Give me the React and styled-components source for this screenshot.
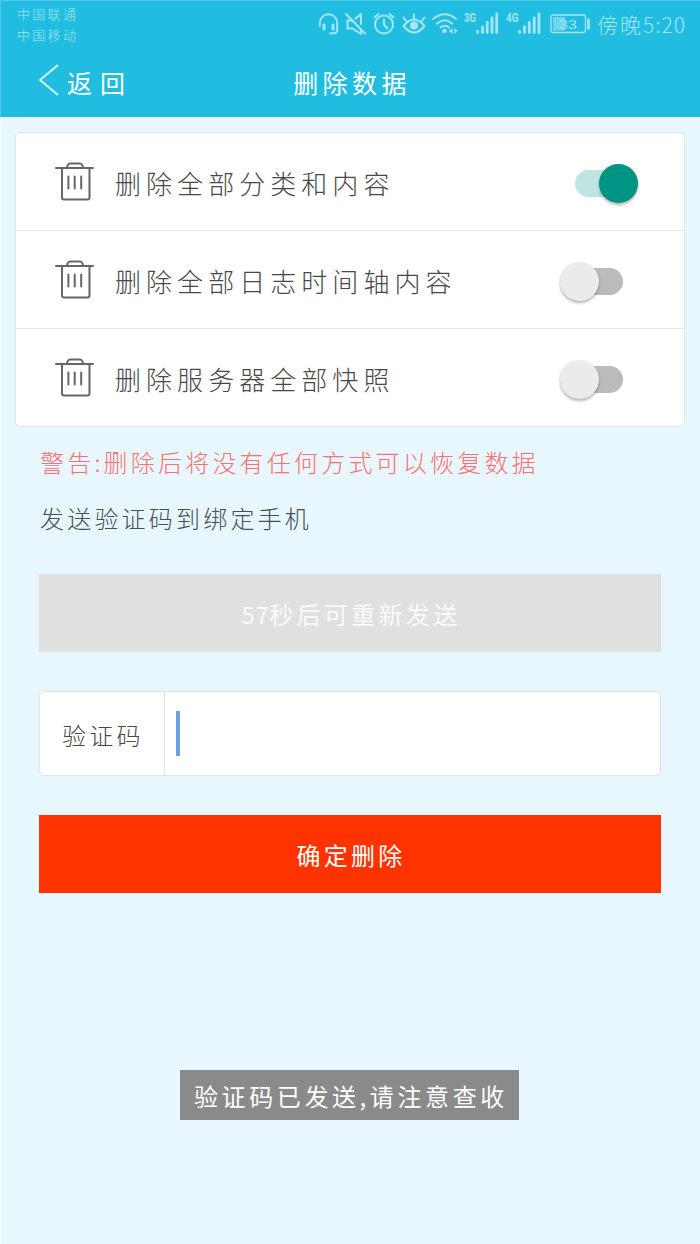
import React, { useState } from 'react';
import styled, { createGlobalStyle } from 'styled-components';

const GlobalStyle = createGlobalStyle`
  * {
    box-sizing: border-box;
  }
  body {
    margin: 0;
    background: #e8f7fd;
    font-family: "Noto Sans CJK SC", sans-serif;
  }
  button {
    font-family: inherit;
  }
`;

const Page = styled.div`
  position: relative;
  width: 700px;
  height: 1244px;
  background: #e8f7fd;
  box-shadow: inset 1px 0 #f6fcff;
  overflow: hidden;
`;

const Header = styled.header`
  height: 117px;
  background: #20bde1;
  box-shadow: inset 1px 1px #4fcbe9;
`;

const StatusBar = styled.div`
  display: flex;
  justify-content: space-between;
  height: 48px;
  padding: 3px 13px 0 17px;
  color: #a6e5f4;
`;

const Carriers = styled.div`
  font-weight: 300;
  font-size: 13px;
  line-height: 21px;
  letter-spacing: 2.3px;
  color: #a6e5f4;
`;

const StatusIcons = styled.div`
  display: flex;
  height: 42px;
  align-items: center;
`;

const Clock = styled.span`
  margin-left: 6px;
  width: 90px;
  font-weight: 300;
  font-size: 21px;
  line-height: 40px;
  letter-spacing: 1px;
  white-space: nowrap;
  span {
    letter-spacing: 2px;
  }
`;

const NavBar = styled.div`
  display: grid;
  grid-template-columns: 200px 1fr 200px;
  height: 69px;
  padding-bottom: 1px;
  align-items: center;
  color: #fff;
`;

const NavText = styled.span`
  font-size: 25px;
  line-height: 36px;
  letter-spacing: ${props => props.$gap || '4.4px'};
`;

const Back = styled.div`
  display: flex;
  align-items: center;
  padding-left: 38px;
  svg {
    margin: -4px 8px 0 0;
  }
`;

const Title = styled.div`
  padding-left: 4px;
  text-align: center;
`;

const Card = styled.section`
  margin: 15px 15px 0;
  border: 1px solid #d9e6eb;
  border-radius: 5px;
  background: #fff;
`;

const Row = styled.div`
  display: flex;
  align-items: center;
  height: 98px;
  padding: 0 46px 0 39px;
  border-bottom: 1px solid #e3e5e6;
  &:last-child {
    height: 97px;
    border-bottom: 0;
  }
  svg {
    margin-top: -1px;
  }
`;

const RowLabel = styled.span`
  flex: 1;
  margin-left: 21px;
  padding-top: 2px;
  font-weight: 300;
  font-size: 26px;
  line-height: 40px;
  letter-spacing: 5.05px;
  color: #484848;
`;

const Switch = styled.button`
  display: flex;
  align-items: center;
  height: 40px;
  margin: 3px ${props => (props.$on ? '0' : '15px')} 0 0;
  padding: 0;
  border: 0;
  background: none;
`;

const Track = styled.span`
  display: flex;
  align-items: center;
  justify-content: ${props => (props.$on ? 'flex-end' : 'flex-start')};
  width: 47px;
  height: 27px;
  border-radius: 14px;
  background: ${props => (props.$on ? '#bde5e1' : '#bbb')};
  margin-left: ${props => (props.$on ? '0' : '16px')};
  margin-right: ${props => (props.$on ? '16px' : '0')};
`;

const Thumb = styled.span`
  flex: none;
  width: 39px;
  height: 39px;
  margin: 0 ${props => (props.$on ? '-16px 0 0' : '0 0 -16px')};
  border-radius: 50%;
  background: ${props => (props.$on ? '#009485' : '#ebebeb')};
  box-shadow: 0 2px 3px rgba(0, 0, 0, 0.3);
`;

const Form = styled.main`
  padding: 0 39px;
`;

const Message = styled.p`
  margin: ${props => props.$top} 0 0 1px;
  font-weight: 300;
  font-size: 24px;
  line-height: 36px;
  letter-spacing: 3.2px;
  white-space: nowrap;
  color: ${props => props.color};
`;

const Button = styled.button`
  display: flex;
  align-items: center;
  justify-content: center;
  width: 100%;
  height: 78px;
  margin-top: ${props => props.$top};
  padding: 0 0 0 2px;
  border: 0;
  background: ${props => props.$background};
  color: ${props => props.color};
  font-size: 24px;
  letter-spacing: 3.3px;
`;

const Digits = styled.span`
  letter-spacing: 0.6px;
`;

const Field = styled.label`
  display: flex;
  height: 85px;
  margin-top: 39px;
  border: 1px solid #dbe5e9;
  border-radius: 5px;
  background: #fff;
`;

const FieldLabel = styled.span`
  display: flex;
  align-items: center;
  width: 125px;
  padding: 1px 0 0 22px;
  border-right: 1px solid #e3e3e3;
  font-weight: 300;
  font-size: 24px;
  letter-spacing: 3.2px;
  color: #484848;
`;

const Caret = styled.span`
  width: 4px;
  height: 45px;
  margin: 19px 0 0 11px;
  background: #66a3e0;
`;

const Toast = styled.div`
  position: absolute;
  left: 180px;
  top: 1070px;
  width: 339px;
  height: 50px;
  padding: 2px 0 0 14px;
  background: #8a8a8a;
  color: #fff;
  font-size: 24px;
  line-height: 48px;
  letter-spacing: 3.6px;
  white-space: nowrap;
`;

const TrashIcon = () => (
  <svg width="39" height="39" viewBox="0 0 39 39" fill="none" stroke="#666" strokeWidth="2" strokeLinecap="round" strokeLinejoin="round">
    <path d="M1 6h37M12 5.500l.5-2q.8-2 2.500-2h10q1.700 0 2.500 2l.5 2" />
    <path d="M7 6v29.500q0 2 2 2h23.500q2 0 2-2V6M13.400 14.500v12M19.700 14.500v12M26.200 14.500v12" />
  </svg>
);

// headset, mute, alarm, eye, wifi, two signals and the battery share one strip
const SystemIcons = () => (
  <svg width="274" height="40" viewBox="316 4 274 40" fill="none" stroke="currentColor" strokeWidth="2" strokeLinecap="round" strokeLinejoin="round">
    <path d="M318.800 26v-3a8.700 8.700 0 0 1 17.400 0v7q0 3.200-3.200 3.200h-4" />
    <path d="M323 25v4M332 25v4" strokeWidth="3" />
    <path d="M345 14l19 19.500M352 20.500h-5.500v8h5l8.500 5.500v-5M354.500 18.500l5.500-4.500v10" />
    <circle cx="383" cy="24.500" r="9" />
    <path d="M383 19.500v5l3.500 4M373.500 17.500l4-3.500M392.500 17.500l-4-3.500" />
    <path d="M402.500 26q10.500-13 21 0-10.500 13-21 0zM413 19v-4.500M405.500 21.500l-3-4M420.500 21.500l3-4" />
    <circle cx="413" cy="25.500" r="4" fill="currentColor" stroke="none" />
    <path d="M432 19q12-9.500 23 0M436 23.500q8-6.500 15 0M439.500 27.500q4.500-3.500 8.500 0" />
    <circle cx="443.500" cy="31" r="2.300" fill="currentColor" stroke="none" />
    <path d="M451.500 28v6l-3.500-3zM453.500 28v6l3-3z" fill="currentColor" stroke="none" />
    <text x="463" y="21.500" fontFamily="Roboto" fontSize="12" fontWeight="700" textLength="12" lengthAdjust="spacingAndGlyphs" fill="currentColor" stroke="none">3G</text>
    <path d="M476.500 31.500v1M481.500 27v5.500M486.200 22.500v10M491 18v14.500M495.700 14v18.500" strokeWidth="2.800" />
    <text x="505" y="21.500" fontFamily="Roboto" fontSize="12" fontWeight="700" textLength="12.500" lengthAdjust="spacingAndGlyphs" fill="currentColor" stroke="none">4G</text>
    <path d="M518.500 31.500v1M523.500 27v5.500M528.300 22.500v10M533.200 18v14.500M538 14v18.500" strokeWidth="2.800" />
    <rect x="550" y="15" width="34.500" height="17.500" rx="2" strokeWidth="1.300" />
    <rect x="552" y="17" width="12" height="13.500" fill="#72d5ed" stroke="none" />
    <path d="M587.500 19.500v9" strokeWidth="2.600" />
    <text x="558" y="28.500" fontFamily="Liberation Sans" fontSize="13.500" textLength="18" lengthAdjust="spacingAndGlyphs" fill="currentColor" stroke="none">33</text>
  </svg>
);

const options = ['删除全部分类和内容', '删除全部日志时间轴内容', '删除服务器全部快照'];

const App = () => {
  const [enabled, setEnabled] = useState([true, false, false]);

  const toggle = index => {
    setEnabled(enabled.map((on, i) => (i === index ? !on : on)));
  };

  return (
    <Page>
      <GlobalStyle />
      <Header>
        <StatusBar>
          <Carriers>
            <div>中国联通</div>
            <div>中国移动</div>
          </Carriers>
          <StatusIcons>
            <SystemIcons />
            <Clock><span>傍晚</span>5:20</Clock>
          </StatusIcons>
        </StatusBar>
        <NavBar>
          <Back>
            <svg width="21" height="32" viewBox="0 0 21 32" fill="none" stroke="#d3f2f9" strokeWidth="2">
              <path d="M20 1L2 16l18 15" />
            </svg>
            <NavText $gap="8px">返回</NavText>
          </Back>
          <Title><NavText>删除数据</NavText></Title>
        </NavBar>
      </Header>

      <Card>
        {options.map((option, index) => (
          <Row key={option}>
            <TrashIcon />
            <RowLabel>{option}</RowLabel>
            <Switch $on={enabled[index]} onClick={() => toggle(index)}>
              <Track $on={enabled[index]}>
                <Thumb $on={enabled[index]} />
              </Track>
            </Switch>
          </Row>
        ))}
      </Card>

      <Form>
        <Message $top="17px" color="#fb7070">警告:删除后将没有任何方式可以恢复数据</Message>
        <Message $top="20px" color="#485054">发送验证码到绑定手机</Message>
        <Button $top="38px" $background="#e0e0e0" color="#fafafa"><Digits>57</Digits>秒后可重新发送</Button>
        <Field>
          <FieldLabel>验证码</FieldLabel>
          <Caret />
        </Field>
        <Button $top="39px" $background="#ff3300" color="#fff">确定删除</Button>
      </Form>

      <Toast>验证码已发送,请注意查收</Toast>
    </Page>
  );
};

export default App;
